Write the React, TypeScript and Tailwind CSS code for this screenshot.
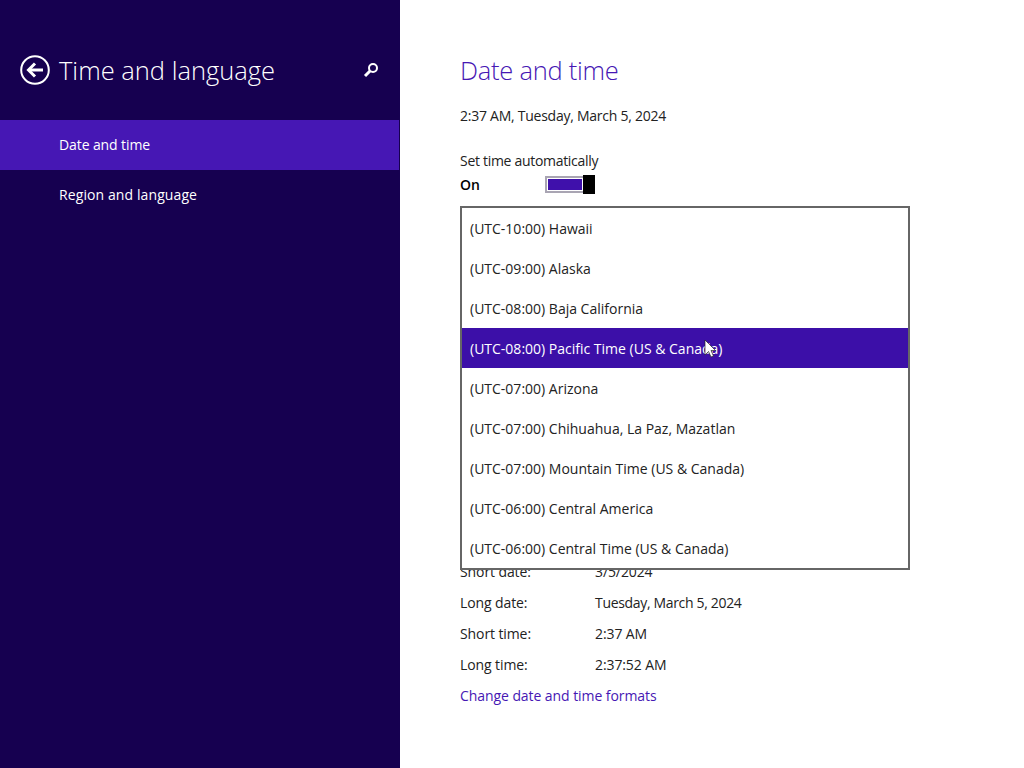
const zones = [
  "(UTC-10:00) Hawaii",
  "(UTC-09:00) Alaska",
  "(UTC-08:00) Baja California",
  "(UTC-08:00) Pacific Time (US & Canada)",
  "(UTC-07:00) Arizona",
  "(UTC-07:00) Chihuahua, La Paz, Mazatlan",
  "(UTC-07:00) Mountain Time (US & Canada)",
  "(UTC-06:00) Central America",
  "(UTC-06:00) Central Time (US & Canada)",
];

const formats = [
  ["Short date:", "3/5/2024"],
  ["Long date:", "Tuesday, March 5, 2024"],
  ["Short time:", "2:37 AM"],
  ["Long time:", "2:37:52 AM"],
];

export default function App() {
  return (
    <div className="flex h-[768px] w-[1024px] overflow-hidden bg-white font-['Open_Sans','Liberation_Sans',sans-serif] text-[14px] text-[#222]">
      <aside className="w-[400px] shrink-0 bg-[#160050] pt-[50px] text-white">
        <div className="flex h-[40px] items-center pl-[20px] pr-[21px]">
          <svg width="30" height="30" viewBox="0 0 30 30" fill="none" stroke="white" className="shrink-0">
            <circle cx="15" cy="15" r="13.8" strokeWidth="2" />
            <path d="M23 15H9" strokeWidth="3" />
            <path d="M15 8.5L8.5 15L15 21.5" strokeWidth="3" />
          </svg>
          <h1 className="ml-[9px] flex-1 text-[25.5px] leading-[40px] font-light">Time and language</h1>
          <svg width="16" height="16" viewBox="0 0 16 16" fill="none" stroke="white" className="shrink-0">
            <circle cx="10" cy="6" r="4" strokeWidth="2" />
            <path d="M7 9L2 14" strokeWidth="3" />
          </svg>
        </div>
        <nav className="mt-[30px]">
          <div className="mr-px flex h-[50px] items-center bg-[#4617b4] pb-[2px] pl-[59px] tracking-[-0.1px]">Date and time</div>
          <div className="flex h-[50px] items-center pb-[2px] pl-[59px] tracking-[0.1px]">Region and language</div>
        </nav>
      </aside>
      <main className="relative flex-1 pl-[60px] pt-[50px]">
        <h2 className="text-[25.5px] leading-[40px] font-light tracking-[-0.25px] text-[#4617b4]">Date and time</h2>
        <p className="mt-[16px] leading-[20px] tracking-[-0.25px]">2:37 AM, Tuesday, March 5, 2024</p>
        <p className="mt-[25px] leading-[20px] tracking-[-0.3px]">Set time automatically</p>
        <div className="mt-[3px] flex h-[20px] items-center">
          <span className="w-[85px] font-semibold tracking-[-0.1px] text-black">On</span>
          <div className="flex items-center">
            <div className="h-[17px] w-[38px] border-2 border-r-0 border-[#a9a5b3] bg-white p-px">
              <div className="h-full bg-[#3f10ab]" />
            </div>
            <div className="h-[19px] w-[12px] bg-black" />
          </div>
        </div>
        <dl className="mt-[362px] tracking-[-0.1px]">
          {formats.map(([k, v], i) => (
            <div key={k} className="flex h-[31px] items-center">
              <dt className="w-[135px]">{k}</dt>
              <dd className={i === 1 ? "tracking-[-0.33px]" : ""}>{v}</dd>
            </div>
          ))}
        </dl>
        <a className="block leading-[31px] tracking-[-0.07px] text-[#4617b4]">Change date and time formats</a>

        <div className="absolute left-[60px] top-[206px] w-[450px] border-2 border-[#666] bg-white">
          {zones.map((z, i) => (
            <div key={z} className={`flex h-[40px] items-center pl-[8px] ${i === 3 ? "bg-[#3c0fa8] text-white" : ""}`}>{z}</div>
          ))}
        </div>
        <svg width="12" height="19" viewBox="0 0 12 19" className="absolute left-[304px] top-[339px]">
          <path d="M1 1V16L4.5 12.5L7 18L9.5 17L7 11.5H11.5Z" fill="white" stroke="#222" strokeWidth="0.7" />
        </svg>
      </main>
    </div>
  );
}
